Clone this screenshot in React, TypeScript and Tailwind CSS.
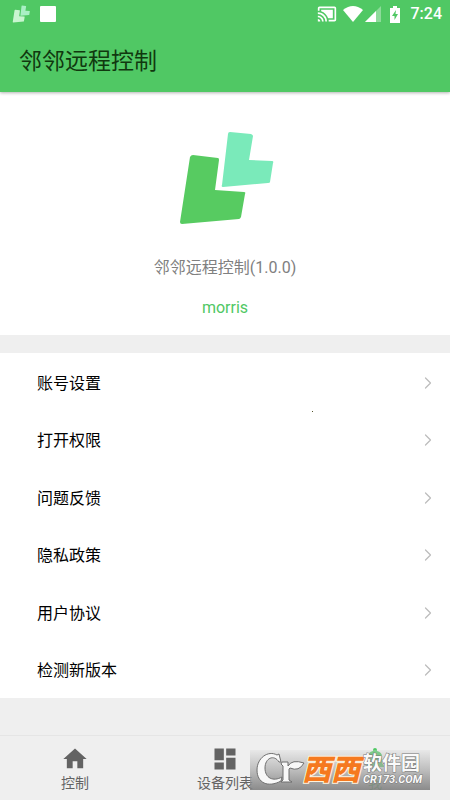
import React from 'react';
import { ChevronRight } from 'lucide-react';
import { MdCastConnected, MdDashboard, MdHome } from 'react-icons/md';

const menuItems = ['账号设置', '打开权限', '问题反馈', '隐私政策', '用户协议', '检测新版本'];

function Logo({ className, front, back }: { className: string; front: string; back: string }) {
  return (
    <svg viewBox="-4 0 98 92" className={className} aria-hidden="true">
      <path
        d="M50 0 71 2Q73 3 73 4L69 28 92 29Q94 29 93 31L90 50Q90 51 88 51L43 55Q41 55 42 53L48 2Q48 0 50 0Z"
        fill={back}
      />
      <path
        d="M13 23 38 26Q39 26 39 28L35 58 64 60Q66 60 65 62L61 85Q60 87 59 87L2 92Q0 92 0 90L10 25Q11 23 13 23Z"
        fill={front}
      />
    </svg>
  );
}

function StatusBar() {
  return (
    <div className="flex h-7 items-center justify-between pl-3 pr-2 text-white">
      <div className="flex items-center gap-[10px]">
        <Logo className="h-[18px] w-[18px]" front="#c9f5d0" back="#a9efc4" />
        <span className="size-4 rounded-[1px] bg-white" />
      </div>
      <div className="flex items-center">
        <MdCastConnected className="size-5" />
        <svg viewBox="0 0 20 16" className="ml-[6px] h-4 w-5" fill="currentColor" aria-hidden="true">
          <path d="M0 4Q10-4 20 4L10 16Z" />
        </svg>
        <svg viewBox="0 0 16 16" className="ml-0.5 size-4" fill="currentColor" aria-hidden="true">
          <path d="M16 0V16H0Z" opacity="0.35" />
          <path d="M11 5V16H0Z" />
        </svg>
        <svg viewBox="0 0 12 17" className="ml-2 h-[17px] w-3" aria-hidden="true">
          <path d="M4 0H8V2H11V17H1V2H4Z" fill="white" />
          <path d="M7 4 3 10H5.500V14L9 8H6.500Z" fill="#50c864" />
        </svg>
        <span className="ml-[10px] text-base font-medium">7:24</span>
      </div>
    </div>
  );
}

function Watermark() {
  return (
    <div className="absolute bottom-[10px] right-5 flex h-10 w-[180px] items-center bg-linear-to-b from-[#d8d8d8]/30 via-[#a8a8a8]/70 to-[#808080]/90">
      <svg viewBox="0 0 56 40" className="h-10 w-14 shrink-0" aria-hidden="true">
        <g stroke="#6f6f6f" strokeWidth="1" fill="#f8f8f8">
          <path d="M31 12 29 4 27 5C18 0 7 8 7 20C7 33 18 38 31 31L32 27C23 32 15 28 15 18C15 8 24 4 29 12Z" />
          <path d="M32 12H38V16Q42 9 54 13Q49 22 40 18L39 19V30L42 32H31L33 30V16L31 14Z" />
        </g>
      </svg>
      <span className="-ml-1 text-[29px] leading-10 font-black italic text-[#f5791f] [-webkit-text-stroke:2px_#fff3dc] [paint-order:stroke_fill]">
        西西
      </span>
      <span className="flex flex-col whitespace-nowrap pl-[3px] text-[#fafafa] [-webkit-text-stroke:1px_#777] [paint-order:stroke_fill]">
        <b className="text-[19px] leading-5">软件园</b>
        <b className="text-[11px] leading-3 italic">CR173.COM</b>
      </span>
    </div>
  );
}

export default function App() {
  return (
    <div className="flex min-h-screen flex-col bg-[#efefef] font-[Roboto,'Noto_Sans_CJK_SC',sans-serif]">
      <header className="relative bg-[#50c864] shadow-[0_1px_3px_rgba(0,0,0,0.3)]">
        <StatusBar />
        <div className="flex h-16 items-center px-[19px] pt-1">
          <h1 className="text-[23px] text-[#10380f]">邻邻远程控制</h1>
        </div>
      </header>
      <main>
        <section className="flex flex-col items-center bg-white pb-[15px] pt-10">
          <Logo className="h-[92px] w-[98px]" front="#57cb61" back="#7aeaba" />
          <p className="mt-8 text-base leading-6 text-[#808080]">邻邻远程控制(1.0.0)</p>
          <p className="mt-4 text-base leading-6 text-[#50c864]">morris</p>
        </section>
        <ul className="relative mt-[18px] grid h-[345px] grid-rows-6 bg-white">
          {menuItems.map((item) => (
            <li key={item}>
              <button className="flex size-full items-center justify-between pl-[37px] pr-3 pt-1 text-base text-black">
                {item}
                <ChevronRight className="mb-0.5 size-5 text-[#bdbdbd]" strokeWidth={1.5} />
              </button>
            </li>
          ))}
          <li className="absolute left-[312px] top-[58px] size-px bg-[#55552a]" aria-hidden="true" />
        </ul>
      </main>
      <nav className="relative mt-auto grid h-[65px] grid-cols-3 border-t border-[#e5e5e5] text-sm text-[#636363]">
        <button className="flex flex-col items-center pt-[9px]">
          <MdHome className="size-7" />
          控制
        </button>
        <button className="flex flex-col items-center pt-[9px]">
          <MdDashboard className="size-7" />
          设备列表
        </button>
        <button className="flex flex-col items-center pt-[9px] text-[#50c864]">
          <svg viewBox="0 0 28 28" className="size-7" fill="currentColor" aria-hidden="true">
            <path d="M14 3a2 2 0 0 1 2 2v1a6 6 0 0 1 5 6v6l2 3v1H5v-1l2-3v-6a6 6 0 0 1 5-6V5a2 2 0 0 1 2-2ZM11 23h6a3 3 0 0 1-6 0Z" />
          </svg>
          我
        </button>
        <Watermark />
      </nav>
    </div>
  );
}
